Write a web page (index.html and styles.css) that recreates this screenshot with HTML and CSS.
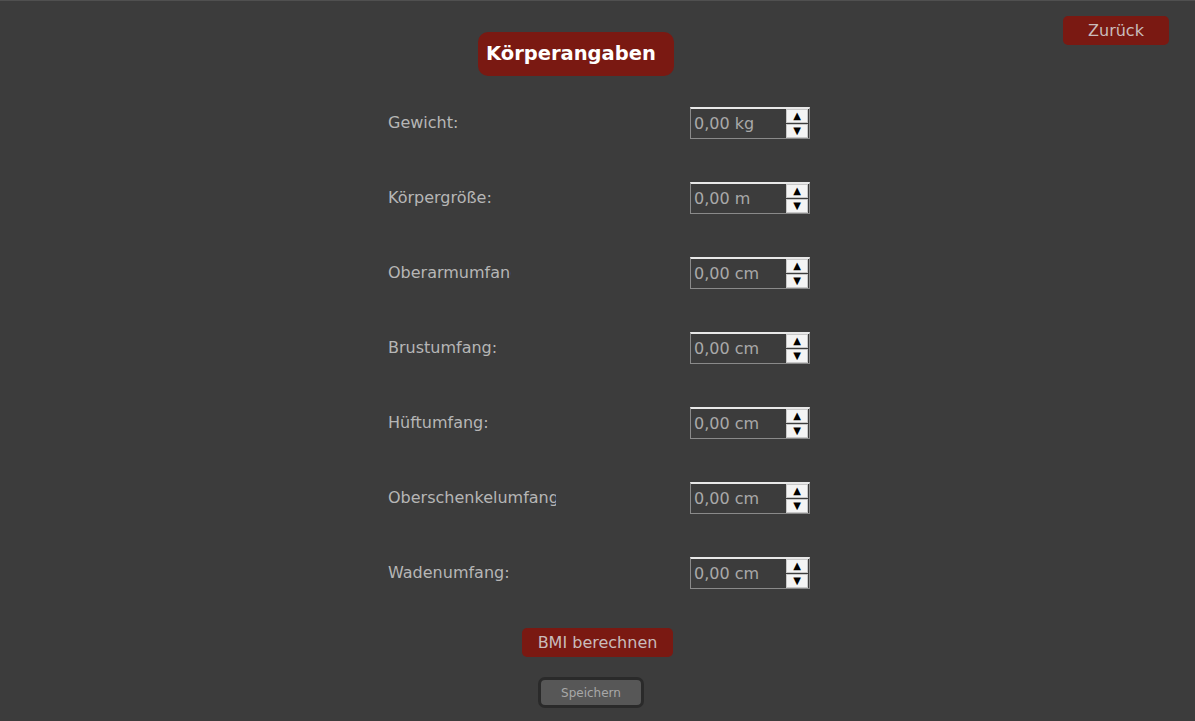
FILE: index.html
```html
<!DOCTYPE html>
<html lang="de">
<head>
<meta charset="utf-8">
<title>Körperangaben</title>
<link rel="stylesheet" href="styles.css">
</head>
<body>
<div class="page">
  <main class="main">
    <h1 class="title">Körperangaben</h1>
    <div class="form">
      <div class="row"><span class="label">Gewicht:</span><div class="field"><span class="value">0,00 kg</span><div class="spin"><span class="btn">&#9650;</span><span class="btn">&#9660;</span></div></div></div>
      <div class="row"><span class="label">Körpergröße:</span><div class="field"><span class="value">0,00 m</span><div class="spin"><span class="btn">&#9650;</span><span class="btn">&#9660;</span></div></div></div>
      <div class="row"><span class="label"><span class="clip clip-short">Oberarmumfang:</span></span><div class="field"><span class="value">0,00 cm</span><div class="spin"><span class="btn">&#9650;</span><span class="btn">&#9660;</span></div></div></div>
      <div class="row"><span class="label">Brustumfang:</span><div class="field"><span class="value">0,00 cm</span><div class="spin"><span class="btn">&#9650;</span><span class="btn">&#9660;</span></div></div></div>
      <div class="row"><span class="label">Hüftumfang:</span><div class="field"><span class="value">0,00 cm</span><div class="spin"><span class="btn">&#9650;</span><span class="btn">&#9660;</span></div></div></div>
      <div class="row"><span class="label"><span class="clip clip-long">Oberschenkelumfang:</span></span><div class="field"><span class="value">0,00 cm</span><div class="spin"><span class="btn">&#9650;</span><span class="btn">&#9660;</span></div></div></div>
      <div class="row"><span class="label">Wadenumfang:</span><div class="field"><span class="value">0,00 cm</span><div class="spin"><span class="btn">&#9650;</span><span class="btn">&#9660;</span></div></div></div>
    </div>
    <button class="bmi">BMI berechnen</button>
    <button class="save">Speichern</button>
  </main>
  <aside class="aside">
    <button class="back">Zurück</button>
  </aside>
</div>
</body>
</html>
```

FILE: styles.css
```css
html, body {
  margin: 0;
  padding: 0;
  background: #3c3c3c;
  height: 100%;
}
body {
  font-family: "DejaVu Sans", Tahoma, sans-serif;
  color: #b9b9b9;
}
.page {
  display: flex;
  min-height: 721px;
  border-top: 1px solid #505050;
  box-sizing: border-box;
}
.main {
  flex: 1;
  padding-left: 388px;
  padding-top: 31px;
  display: flex;
  flex-direction: column;
  align-items: flex-start;
}
.title {
  margin: 0 0 0 90px;
  width: 196px;
  height: 44px;
  box-sizing: border-box;
  background: #7a1912;
  border-radius: 10px;
  color: #ffffff;
  font-size: 19.5px;
  font-weight: bold;
  line-height: 44px;
  padding-left: 8px;
}
.form {
  display: flex;
  flex-direction: column;
  gap: 43px;
  margin-top: 31px;
}
.row {
  display: flex;
  align-items: center;
  height: 32px;
}
.label {
  width: 302px;
  font-size: 16px;
  color: #b6b6b6;
  line-height: 19px;
  margin-top: -2px;
}
.clip {
  display: block;
  overflow: hidden;
  white-space: nowrap;
}
.clip-short { width: 123px; }
.clip-long { width: 168px; }
.field {
  width: 120px;
  height: 32px;
  box-sizing: border-box;
  border: 1px solid #8a8a8a;
  border-top: 2px solid #e8e8e8;
  display: flex;
  align-items: center;
  justify-content: space-between;
  padding: 0 0 0 3px;
}
.value {
  font-size: 16px;
  color: #a9a9a9;
}
.spin {
  display: flex;
  flex-direction: column;
  gap: 1px;
  width: 22px;
  margin-right: 1px;
}
.btn {
  height: 14px;
  background: #f4f4f4;
  border: 1px solid #c8c8c8;
  box-sizing: border-box;
  color: #000;
  font-size: 10px;
  line-height: 12px;
  text-align: center;
}
button {
  font-family: "DejaVu Sans", Tahoma, sans-serif;
  cursor: pointer;
}
.bmi {
  margin: 39px 0 0 134px;
  width: 151px;
  height: 29px;
  background: #7a1912;
  border: none;
  border-radius: 5px;
  color: #c9bcbc;
  font-size: 16px;
  padding: 0;
}
.save {
  margin: 20px 0 0 150px;
  width: 106px;
  height: 31px;
  background: #575757;
  border: 3px solid #2a2a2a;
  border-radius: 7px;
  color: #a8a8a8;
  font-size: 12px;
  padding: 0;
}
.aside {
  padding: 15px 26px 0 0;
}
.back {
  width: 106px;
  height: 29px;
  background: #7a1912;
  border: none;
  border-radius: 5px;
  color: #c9bcbc;
  font-size: 16px;
  padding: 0;
}
```
